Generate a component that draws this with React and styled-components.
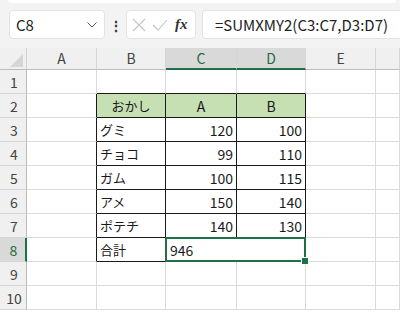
import React from 'react'
import styled, { createGlobalStyle } from 'styled-components'

const GlobalStyle = createGlobalStyle`
  html, body {
    margin: 0;
    padding: 0;
    background: #ffffff;
    font-family: "Noto Sans CJK JP", "Noto Sans", sans-serif;
  }
`

const COLS = ['A', 'B', 'C', 'D', 'E', 'F']
const COL_WIDTHS = '27px 70px 69px 71px 69px 70px 1fr'

const rows = [
  null,
  ['おかし', 'A', 'B'],
  ['グミ', 120, 100],
  ['チョコ', 99, 110],
  ['ガム', 100, 115],
  ['アメ', 150, 140],
  ['ポテチ', 140, 130],
  ['合計', 946],
  null,
  null,
]

function Page() {
  return (
    <Wrap>
      <Toolbar>
        <TopEdge />
        <BarRow>
          <NameBox>
            <span>C8</span>
            <svg width="12" height="8" viewBox="0 0 12 8">
              <path d="M1.5 1.5 L6 6 L10.5 1.5" fill="none" stroke="#555" strokeWidth="1" />
            </svg>
          </NameBox>
          <Dots>⋮</Dots>
          <IconBox>
            <svg width="14" height="14" viewBox="0 0 14 14">
              <path d="M1 1 L13 13 M13 1 L1 13" stroke="#c4c4c4" strokeWidth="1.1" />
            </svg>
            <svg width="16" height="14" viewBox="0 0 16 14">
              <path d="M1 7 L6 12 L15 2" fill="none" stroke="#c4c4c4" strokeWidth="1.1" />
            </svg>
            <Fx>fx</Fx>
          </IconBox>
          <FormulaBox>=SUMXMY2(C3:C7,D3:D7)</FormulaBox>
        </BarRow>
      </Toolbar>
      <Sheet>
        <Corner>
          <svg width="27" height="22" viewBox="0 0 27 22">
            <path d="M10 19 L23 19 L23 6 Z" fill="#d6d6d6" />
          </svg>
        </Corner>
        {COLS.map(c => (
          <ColHead key={c} $sel={c === 'C' || c === 'D'}>{c === 'F' ? '' : c}</ColHead>
        ))}
        {rows.map((data, i) => {
          const r = i + 1
          const inTable = r >= 2 && r <= 8
          return (
            <React.Fragment key={r}>
              <RowHead $sel={r === 8}>{r}</RowHead>
              <Cell $right={inTable} />
              <Cell $right={inTable} $bottom={inTable || r === 1} $fill={r === 2} $align={r === 2 ? 'center' : 'left'} $kana>
                {data ? data[0] : ''}
              </Cell>
              {r === 8 ? (
                <MergedCell>
                  946
                  <Selection />
                  <Handle />
                </MergedCell>
              ) : (
                <>
                  <Cell $right={inTable} $bottom={inTable || r === 1} $fill={r === 2} $align={r === 2 ? 'center' : 'right'}>
                    {data ? data[1] : ''}
                  </Cell>
                  <Cell $right={inTable} $bottom={inTable || r === 1} $fill={r === 2} $align={r === 2 ? 'center' : 'right'}>
                    {data ? data[2] : ''}
                  </Cell>
                </>
              )}
              <Cell />
              <Cell />
            </React.Fragment>
          )
        })}
      </Sheet>
    </Wrap>
  )
}

export default function App() {
  return (
    <>
      <GlobalStyle />
      <Page />
    </>
  )
}

const Wrap = styled.div`
  width: 400px;
  height: 313px;
  overflow: hidden;
  background: #fff;
`

const Toolbar = styled.div`
  height: 48px;
  background: #f3f3f3;
`

const TopEdge = styled.div`
  height: 3px;
  margin: 0 4px 0 8px;
  background: #fff;
  border-radius: 0 0 6px 6px;
`

const BarRow = styled.div`
  display: flex;
  align-items: center;
  padding: 7px 0 0 9px;
  height: 29px;
`

const NameBox = styled.div`
  width: 96px;
  height: 29px;
  box-sizing: border-box;
  background: #fff;
  border: 1px solid #e3e3e3;
  border-radius: 4px;
  display: flex;
  align-items: center;
  justify-content: space-between;
  padding: 0 6px 0 6px;
  font-size: 15px;
  color: #222;
  span { line-height: 1; }
`

const Dots = styled.div`
  width: 21px;
  text-align: center;
  font-size: 14px;
  font-weight: bold;
  color: #333;
`

const IconBox = styled.div`
  width: 70px;
  height: 29px;
  box-sizing: border-box;
  background: #fff;
  border: 1px solid #e3e3e3;
  border-radius: 4px;
  display: flex;
  align-items: center;
  gap: 6px;
  padding: 0 0 0 5px;
`

const Fx = styled.span`
  font-family: "Liberation Serif", serif;
  font-style: italic;
  font-weight: bold;
  font-size: 15px;
  color: #333;
  margin-left: 1px;
`

const FormulaBox = styled.div`
  margin-left: 6px;
  flex: 1;
  height: 29px;
  box-sizing: border-box;
  background: #fff;
  border: 1px solid #e3e3e3;
  border-right: none;
  border-radius: 4px 0 0 4px;
  display: flex;
  align-items: center;
  padding-left: 12px;
  font-size: 15px;
  color: #222;
  white-space: nowrap;
`

const Sheet = styled.div`
  display: grid;
  grid-template-columns: ${COL_WIDTHS};
  grid-template-rows: 22px repeat(10, 24px);
  font-size: 14px;
  color: #1a1a1a;
`

const Corner = styled.div`
  background: #f0f0f0;
  border-right: 1px solid #d0d0d0;
  border-bottom: 1px solid #bcbcbc;
  box-sizing: border-box;
  svg { display: block; }
`

const ColHead = styled.div`
  box-sizing: border-box;
  background: ${p => (p.$sel ? '#d9d9d9' : '#f0f0f0')};
  border-right: 1px solid #d5d5d5;
  border-bottom: ${p => (p.$sel ? '2px solid #1e7145' : '1px solid #bcbcbc')};
  color: ${p => (p.$sel ? '#1e6b41' : '#444')};
  display: flex;
  align-items: center;
  justify-content: center;
  font-size: 14px;
  padding-bottom: ${p => (p.$sel ? '0' : '1px')};
`

const RowHead = styled.div`
  box-sizing: border-box;
  background: ${p => (p.$sel ? '#d9d9d9' : '#f0f0f0')};
  border-right: ${p => (p.$sel ? '2px solid #1e7145' : '1px solid #bcbcbc')};
  border-bottom: 1px solid #d5d5d5;
  color: ${p => (p.$sel ? '#1e6b41' : '#444')};
  display: flex;
  align-items: center;
  justify-content: center;
  font-size: 14px;
  padding-left: 2px;
`

const Cell = styled.div`
  box-sizing: border-box;
  background: ${p => (p.$fill ? '#c6e0b4' : '#fff')};
  border-right: 1px solid ${p => (p.$right ? '#1a1a1a' : '#dadada')};
  border-bottom: 1px solid ${p => (p.$bottom ? '#1a1a1a' : '#dadada')};
  display: flex;
  align-items: center;
  justify-content: ${p => (p.$align === 'center' ? 'center' : p.$align === 'right' ? 'flex-end' : 'flex-start')};
  padding: 0 3px;
  white-space: nowrap;
  font-size: ${p => (p.$kana ? '13px' : '14px')};
`

const MergedCell = styled.div`
  grid-column: span 2;
  position: relative;
  box-sizing: border-box;
  border-right: 1px solid #dadada;
  border-bottom: 1px solid #dadada;
  display: flex;
  align-items: center;
  padding: 0 4px;
  background: #fff;
`

const Selection = styled.div`
  position: absolute;
  left: -1px;
  top: -1px;
  right: -1px;
  bottom: -1px;
  border: 2px solid #1e7145;
  pointer-events: none;
`

const Handle = styled.div`
  position: absolute;
  right: -4px;
  bottom: -4px;
  width: 6px;
  height: 6px;
  background: #1e7145;
  border: 1px solid #fff;
`
